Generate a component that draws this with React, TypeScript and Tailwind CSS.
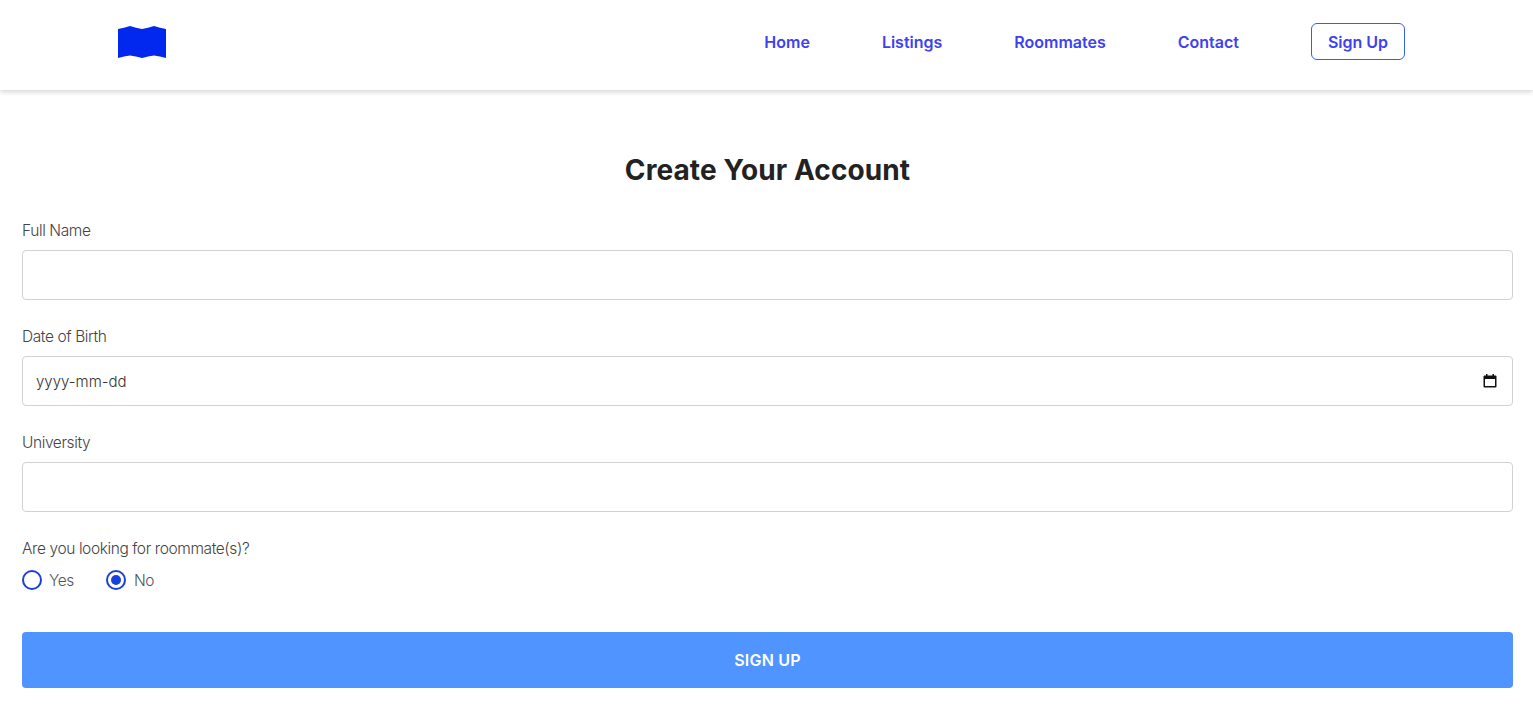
export default function App() {
  const links = ["Home", "Listings", "Roommates", "Contact"];
  const fields = ["Full Name", "Date of Birth", "University"];
  return (
    <div className="min-h-[721px] bg-white font-['Inter',sans-serif] text-[#222]">
      <header className="flex h-[90px] items-center justify-between pb-[6px] pl-[118px] pr-[128px] bg-white shadow-[0_2px_5px_rgba(0,0,0,0.17)]">
        <svg width="48" height="32" viewBox="0 0 48 32" aria-label="logo">
          <path d="M0 3 Q6 2 12 0 Q18 2 24 3 Q30 2 36 0 Q42 2 48 3 V32 Q42 30 36 29.5 Q30 30 24 32 Q18 30 12 29.5 Q6 30 0 32 Z" fill="#0227ee" />
        </svg>
        <nav className="flex items-center gap-[72px] text-[16px] font-semibold text-[#3d41f2]">
          {links.map((l) => (
            <a key={l} href="#">{l}</a>
          ))}
          <a href="#" className="mb-[2px] flex h-[37px] w-[94px] items-center justify-center rounded-[6px] border border-[#2f62e8] pt-[2px]">Sign Up</a>
        </nav>
      </header>
      <main className="pl-[22px] pr-[20px] pt-[62px]">
        <h1 className="h-[36px] text-center text-[28px] leading-[36px] font-bold tracking-[0.1px] text-[#222]">Create Your Account</h1>
        <form className="mt-[32px] flex flex-col">
          {fields.map((f) => (
            <div key={f} className="mb-[26px]">
              <label className="mb-[9px] block h-[21px] text-[15.5px] leading-[21px] font-light tracking-[-0.4px] text-[#444]">{f}</label>
              {f === "Date of Birth" ? (
                <div className="flex h-[50px] items-center justify-between rounded-[4px] border border-[#d2d2d2] pl-[13px] pr-[14px]">
                  <span className="mt-[2px] text-[15px] text-[#333] font-light">yyyy-mm-dd</span>
                  <svg width="16" height="16" viewBox="0 0 16 16" aria-hidden="true">
                    <path d="M4 1h1.5v1.5h5V1H12v1.5h1.5A1 1 0 0 1 14.5 3.5v10a1 1 0 0 1-1 1h-11a1 1 0 0 1-1-1v-10a1 1 0 0 1 1-1H4zM3 6v7h10V6z" fill="#111" />
                  </svg>
                </div>
              ) : (
                <input type="text" className="block h-[50px] w-full rounded-[4px] border border-[#d2d2d2] bg-white outline-none" />
              )}
            </div>
          ))}
          <div className="h-[21px] text-[15.5px] leading-[21px] font-light tracking-[-0.4px] text-[#444]">Are you looking for roommate(s)?</div>
          <div className="mt-[10px] flex h-[21px] items-center gap-[32px] text-[15.5px] tracking-[-0.4px] font-light text-[#555]">
            <label className="flex items-center gap-[7px]">
              <span className="h-[20px] w-[20px] rounded-full border-2 border-[#1a3fdc]" />
              <span className="mt-[2px]">Yes</span>
            </label>
            <label className="flex items-center gap-[8px]">
              <span className="flex h-[20px] w-[20px] items-center justify-center rounded-full border-2 border-[#1a3fdc]">
                <span className="h-[10px] w-[10px] rounded-full bg-[#1a3fdc]" />
              </span>
              <span className="mt-[2px]">No</span>
            </label>
          </div>
          <button type="button" className="mt-[42px] h-[56px] w-full rounded-[4px] bg-[#4f94ff] text-[16px] font-semibold tracking-[0.2px] text-white">SIGN UP</button>
        </form>
      </main>
    </div>
  );
}
